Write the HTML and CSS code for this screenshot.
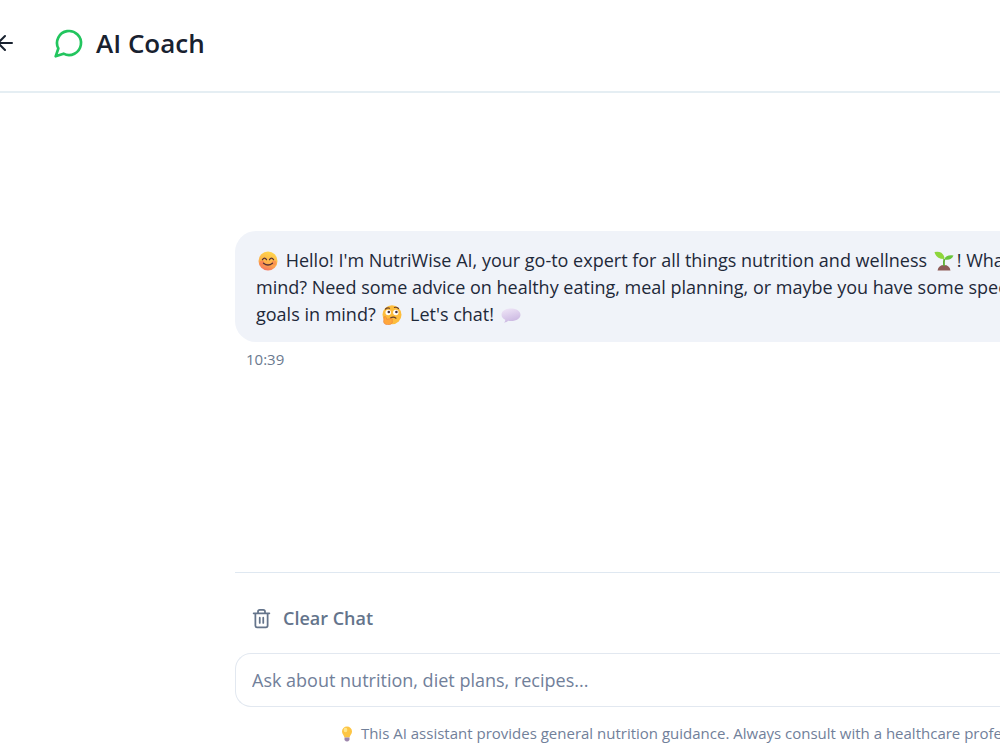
FILE: index.html
```html
<!DOCTYPE html>
<html lang="en">
<head>
    <meta charset="UTF-8">
    <meta name="viewport" content="width=device-width, initial-scale=1.0">
    <title>AI Coach</title>
    <link rel="stylesheet" href="styles.css">
</head>
<body>
    <!-- header -->
    <header class="header">
        <a class="back-link" href="#" aria-label="Back">
            <svg class="back-icon" viewBox="0 0 24 24"><path d="M12 19l-7-7 7-7M19 12H5"/></svg>
        </a>
        <svg class="logo" viewBox="0 0 24 24"><path d="M7.9 20A9 9 0 1 0 4 16.1L2 22Z"/></svg>
        <h1 class="title">AI Coach</h1>
    </header>

    <main class="chat">
        <!-- messages -->
        <section class="messages">
            <div class="bubble">
                <p class="line">
                    <svg class="emoji" viewBox="0 0 20 20">
                        <defs>
                            <linearGradient id="face" x1="0.7" y1="0" x2="0.4" y2="1">
                                <stop offset="0" stop-color="#ffd84d"/>
                                <stop offset="0.6" stop-color="#fdb14a"/>
                                <stop offset="1" stop-color="#f4735e"/>
                            </linearGradient>
                        </defs>
                        <circle cx="10" cy="10" r="9.5" fill="url(#face)"/>
                        <circle cx="4" cy="12" r="2.4" fill="#fa7558" opacity="0.6"/>
                        <circle cx="16" cy="12" r="2.4" fill="#fa7558" opacity="0.5"/>
                        <path d="M4.5 8.6q2-2.8 4 0M11.5 8.6q2-2.8 4 0M5.5 12.2q4.5 3.6 9 0" fill="none" stroke="#553036" stroke-width="1.3" stroke-linecap="round"/>
                    </svg>
                    Hello! I'm NutriWise AI, your go-to expert for all things nutrition and wellness
                    <svg class="emoji" viewBox="0 0 20 20">
                        <path d="M3.5 19.5q1-5.5 6.500-5.500t6.500 5.500z" fill="#8d5b56"/>
                        <path d="M10 15q-.4-4 .3-7" fill="none" stroke="#5fae35" stroke-width="1.8"/>
                        <path d="M10 8Q2 8 .5 1Q9-.5 10.500 7z" fill="#8ed63b"/>
                        <path d="M10.300 8.500Q12 3.500 19.500 4.500Q17 10 10.300 8.500z" fill="#69c53c"/>
                    </svg>! What's on your
                </p>
                <p class="line">mind? Need some advice on healthy eating, meal planning, or maybe you have some specific health</p>
                <p class="line">
                    goals in mind?
                    <svg class="emoji" viewBox="0 0 20 20">
                        <circle cx="10" cy="9.8" r="9.5" fill="#fdbd3d"/>
                        <circle cx="6.2" cy="7.5" r="2.7" fill="#fff"/>
                        <circle cx="13.8" cy="7.5" r="2.7" fill="#fff"/>
                        <circle cx="6.8" cy="7" r="1.3" fill="#49313b"/>
                        <circle cx="14.4" cy="7" r="1.3" fill="#49313b"/>
                        <path d="M3.5 4q2-1.800 4-.8M12.500 2.500q2-.8 4 1M8.500 13q3-2 5.500.2" fill="none" stroke="#67402f" stroke-width="1.2" stroke-linecap="round"/>
                        <path d="M2 12q1.500-1.500 2.200.5l.5 1.800 4.800-.8q1.500.2.6 1.500 1.500 3-2 4.600Q2.500 20.500 1.600 17z" fill="#ffa63b" stroke="#e9803c" stroke-width="0.6"/>
                    </svg>
                    Let's chat!
                    <svg class="emoji" viewBox="0 0 20 20">
                        <defs>
                            <linearGradient id="speech" x1="0" y1="0" x2="0.4" y2="1">
                                <stop offset="0" stop-color="#f1e8f8"/>
                                <stop offset="1" stop-color="#ccb9e2"/>
                            </linearGradient>
                        </defs>
                        <path d="M10 3.500c5.500 0 9.500 2.600 9.500 6.200s-4 6.300-9.500 6.300q-1.500 0-2.700-.2-1.800 1.900-4.300 1.700 1.500-1.300 1.200-2.800C1.700 13.500.5 11.800.5 9.700.5 6.100 4.500 3.500 10 3.500z" fill="url(#speech)"/>
                    </svg>
                </p>
            </div>
            <time class="time">10:39</time>
        </section>

        <!-- input area -->
        <form class="composer">
            <button class="clear" type="button">
                <svg class="trash" viewBox="0 0 24 24"><path d="M3 6h18M19 6v14a2 2 0 0 1-2 2H7a2 2 0 0 1-2-2V6M8 6V4a2 2 0 0 1 2-2h4a2 2 0 0 1 2 2v2M10 11v6M14 11v6"/></svg>
                Clear Chat
            </button>
            <input class="question" type="text" aria-label="Your question" placeholder="Ask about nutrition, diet plans, recipes...">
            <p class="note">
                <svg class="bulb" viewBox="0 0 16 16">
                    <path d="M8 .5a5 5 0 0 1 5 5c0 2.700-2 3.500-2.500 6h-5C5 9 3 8.200 3 5.500a5 5 0 0 1 5-5z" fill="#fdc544"/>
                    <ellipse cx="6.5" cy="4" rx="1.8" ry="2.2" fill="#ffe58a"/>
                    <path d="M5.500 11.500h5v2.500q-2.500 3-5 0z" fill="#9d86ad"/>
                </svg>
                This AI assistant provides general nutrition guidance. Always consult with a healthcare professional.
            </p>
        </form>
    </main>
</body>
</html>
```
FILE: styles.css
```css
body {
    margin: 0;
    min-height: 100vh;
    display: flex;
    flex-direction: column;
    overflow: hidden;
    background-color: #fff;
    color: #1e2939;
    font-family: "Segoe UI", "Open Sans", sans-serif;
    font-size: 18px;
}

svg {
    flex-shrink: 0;
}

.back-icon, .logo, .trash {
    fill: none;
    stroke: currentColor;
    stroke-width: 2;
    stroke-linecap: round;
    stroke-linejoin: round;
}

/* header */
.header {
    display: flex;
    align-items: center;
    padding: 22px 0 27px;
    border-bottom: 2px solid #e5eef3;
}

.back-link {
    display: flex;
    margin-left: -7px;
    margin-right: 36px;
    color: #18212f;
}

.back-icon {
    width: 24px;
    height: 24px;
}

.logo {
    width: 32px;
    height: 32px;
    margin-right: 11px;
    color: #22c55e;
}

.title {
    margin: 0;
    font-size: 26px;
    font-weight: 600;
    line-height: 42px;
    color: #18212f;
}

/* chat column */
.chat {
    flex: 1;
    display: flex;
    flex-direction: column;
    margin-left: 235px;
    white-space: nowrap;
}

.messages {
    flex: 1;
    padding-top: 138px;
}

.bubble {
    padding: 16px 21px 14px;
    border-radius: 21px 0 0 21px;
    background-color: #f0f3f9;
}

.line {
    margin: 0;
    line-height: 27px;
}

.emoji {
    width: 20px;
    height: 20px;
    margin: 0 3px 0 2px;
    vertical-align: -4px;
}

.time {
    display: block;
    padding: 6px 11px;
    font-size: 15px;
    line-height: 22px;
    color: #6b7a8f;
}

/* composer */
.composer {
    border-top: 1px solid #dfe8f1;
    padding-top: 26px;
}

.clear {
    display: flex;
    align-items: center;
    gap: 11px;
    margin-bottom: 15px;
    padding: 6px 16px;
    border: none;
    background: none;
    color: #64748b;
    font-family: inherit;
    font-size: 18px;
    font-weight: 600;
    line-height: 27px;
    cursor: pointer;
}

.trash {
    width: 21px;
    height: 21px;
}

.question {
    display: block;
    box-sizing: border-box;
    width: 100%;
    height: 54px;
    padding: 0 16px;
    border: 1px solid #e2e8f0;
    border-right: none;
    border-radius: 16px 0 0 16px;
    background-color: #fff;
    font-family: inherit;
    font-size: 18px;
}

.question::placeholder {
    color: #71809a;
    opacity: 1;
}

.note {
    margin: 0;
    padding: 15px 0 5px 104px;
    font-size: 15px;
    line-height: 22px;
    color: #71809a;
}

.bulb {
    width: 16px;
    height: 16px;
    margin-right: 2px;
    vertical-align: -3px;
}
```
